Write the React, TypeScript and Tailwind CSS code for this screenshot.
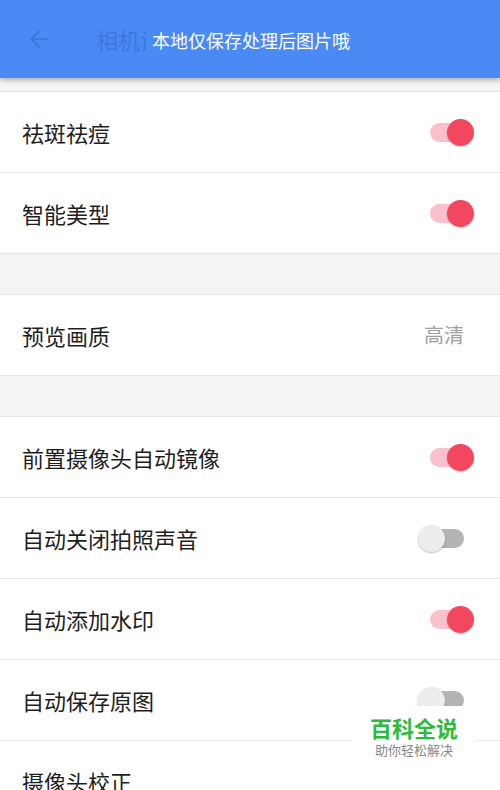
import { ArrowLeft } from 'lucide-react';

type Row = { label: string; kind: 'on' | 'off' | 'value'; value?: string };

function Toggle({ on }: { on: boolean }) {
  return (
    <div className="relative w-[56px] h-[28px] flex items-center">
      <div
        className={`absolute left-[12px] w-[34px] h-[19px] rounded-full ${on ? 'bg-[#f8c1cb]' : 'bg-[#b4b4b4]'}`}
      />
      {on ? (
        <div className="absolute right-0 w-[27px] h-[27px] rounded-full bg-[#f2475f] shadow-[0_1px_2px_rgba(0,0,0,0.2)]" />
      ) : (
        <div className="absolute left-0 w-[27px] h-[27px] rounded-full bg-[#ededed] shadow-[0_1px_2px_rgba(0,0,0,0.25)]" />
      )}
    </div>
  );
}

function SettingRow({ row }: { row: Row }) {
  return (
    <div className="h-[81px] bg-white border-b border-[#e6e6e6] flex items-center justify-between pl-[22px] pr-[26px]">
      <span className="text-[22px] text-[#1e1e1e]">{row.label}</span>
      {row.kind === 'value' ? (
        <span className="text-[20px] text-[#a0a0a0] mr-[10px]">{row.value}</span>
      ) : (
        <Toggle on={row.kind === 'on'} />
      )}
    </div>
  );
}

const groups: Row[][] = [
  [
    { label: '祛斑祛痘', kind: 'on' },
    { label: '智能美型', kind: 'on' },
  ],
  [{ label: '预览画质', kind: 'value', value: '高清' }],
  [
    { label: '前置摄像头自动镜像', kind: 'on' },
    { label: '自动关闭拍照声音', kind: 'off' },
    { label: '自动添加水印', kind: 'on' },
    { label: '自动保存原图', kind: 'off' },
    { label: '摄像头校正', kind: 'value', value: '' },
  ],
];

export default function App() {
  return (
    <div
      className="relative w-[500px] h-[790px] overflow-hidden bg-[#f4f4f4]"
      style={{ fontFamily: '"Noto Sans CJK SC", "Noto Sans", sans-serif' }}
    >
      <header className="relative z-10 h-[78px] bg-[#4a8af4] flex items-center shadow-[0_2px_5px_rgba(0,0,0,0.3)]">
        <ArrowLeft className="ml-[26px] text-[#3d76dc]" size={26} strokeWidth={2} />
        <span className="ml-[44px] text-[22px] text-[#3d76dc]">相机设置</span>
        <div className="absolute left-[146px] top-[22px] h-[36px] px-[6px] bg-[#4a8af4] flex items-center">
          <span className="text-[18px] text-white">本地仅保存处理后图片哦</span>
        </div>
      </header>
      <div className="h-[14px] border-b border-[#e6e6e6]" />
      {groups.map((g, i) => (
        <div key={i}>
          {i > 0 && <div className="h-[41px] border-b border-[#e6e6e6]" />}
          {g.map((r) => (
            <SettingRow key={r.label} row={r} />
          ))}
        </div>
      ))}
      <div className="absolute left-[352px] top-[706px] w-[124px] h-[60px] bg-white flex flex-col items-center">
        <span className="text-[22px] font-bold leading-[28px] text-[#2dbb3c] mt-[7px]">百科全说</span>
        <span className="text-[13px] leading-[18px] text-[#888]">助你轻松解决</span>
      </div>
    </div>
  );
}
